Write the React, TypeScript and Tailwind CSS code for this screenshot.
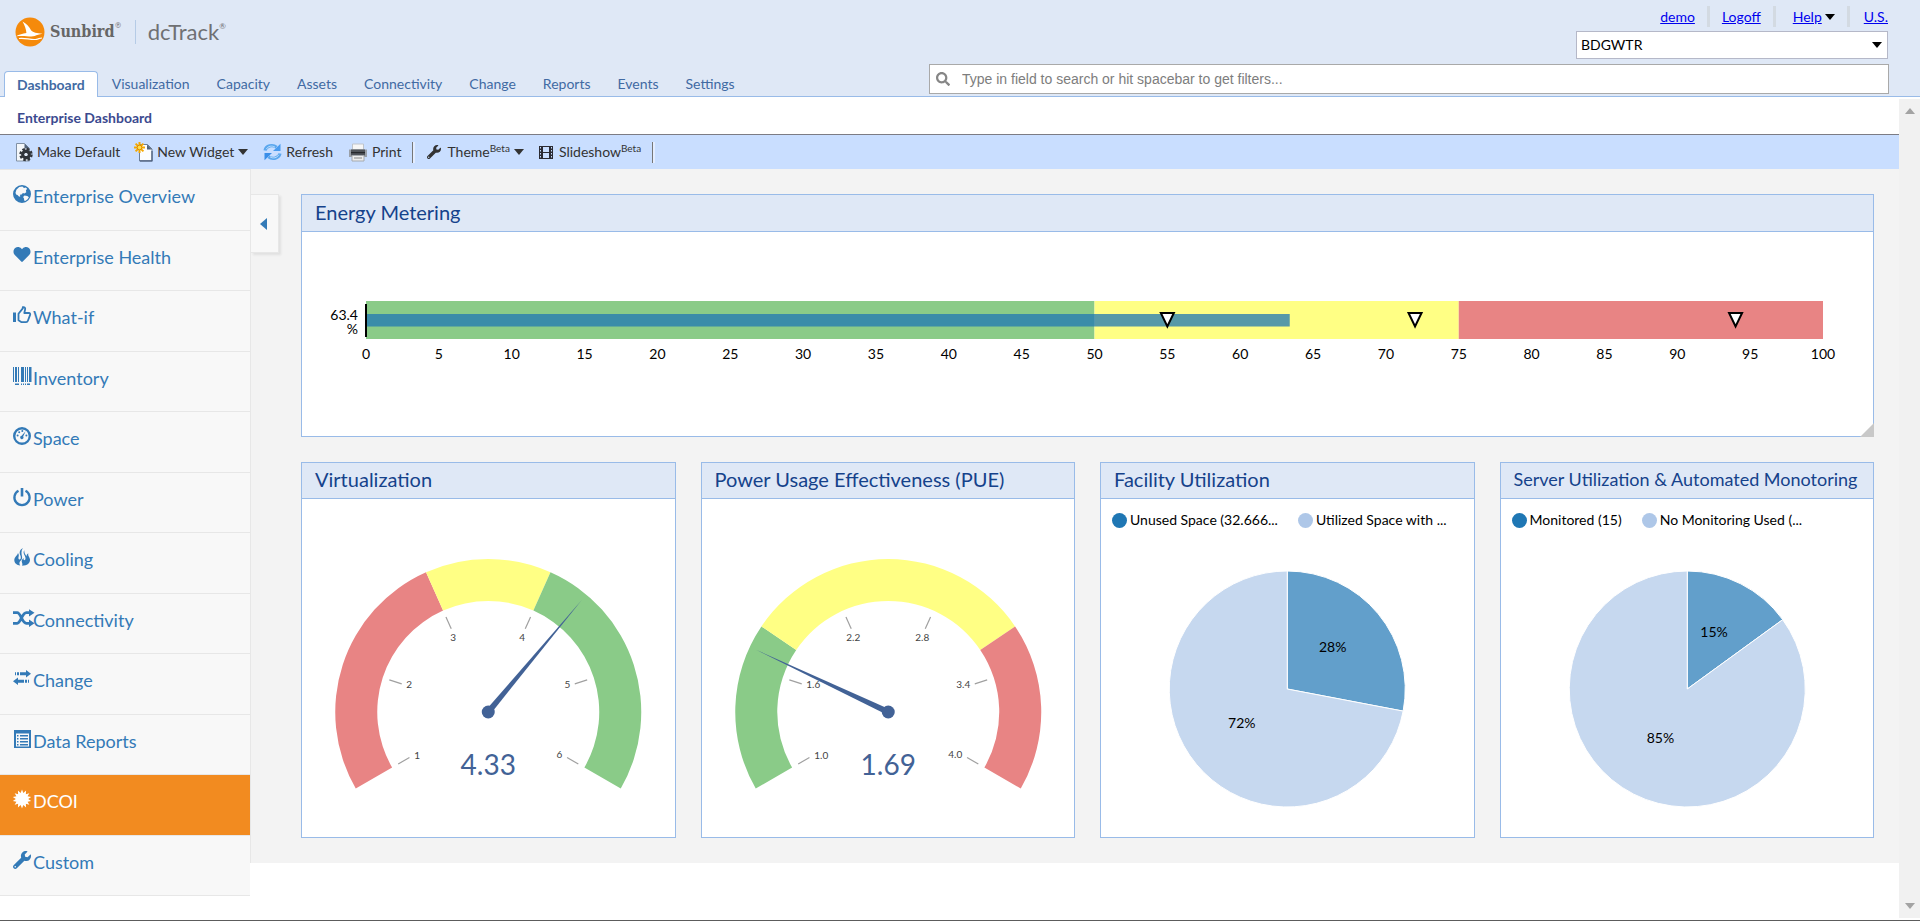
import { useState } from 'react';
import type { ReactNode } from 'react';
import { FaHeart, FaSearch, FaWrench } from 'react-icons/fa';

const GREEN = '#8acb88';
const YELLOW = '#ffff84';
const RED = '#e88484';
const NEEDLE = '#426296';

const tabs = ['Dashboard', 'Visualization', 'Capacity', 'Assets', 'Connectivity', 'Change', 'Reports', 'Events', 'Settings'];

// degrees run clockwise from twelve o'clock
const polar = (cx: number, cy: number, r: number, deg: number) => {
  const a = (deg * Math.PI) / 180;
  return [cx + r * Math.sin(a), cy - r * Math.cos(a)];
};

const arcPath = (cx: number, cy: number, inner: number, outer: number, from: number, to: number) => {
  const large = to - from > 180 ? 1 : 0;
  const [x1, y1] = polar(cx, cy, outer, from);
  const [x2, y2] = polar(cx, cy, outer, to);
  const [x3, y3] = polar(cx, cy, inner, to);
  const [x4, y4] = polar(cx, cy, inner, from);
  return `M${x1} ${y1}A${outer} ${outer} 0 ${large} 1 ${x2} ${y2}L${x3} ${y3}A${inner} ${inner} 0 ${large} 0 ${x4} ${y4}Z`;
};

/* ---------- icons ---------- */

const Glyph = ({ children }: { children: ReactNode }) => (
  <svg viewBox="0 0 18 18" className="h-[18px] w-[18px] shrink-0 overflow-visible" fill="currentColor" aria-hidden="true">
    {children}
  </svg>
);

const GlobeIcon = () => (
  <Glyph>
    <path
      fillRule="evenodd"
      d="M9 0a9 9 0 1 0 0 18A9 9 0 0 0 9 0ZM6.2 1.9l3.200-.3 1.600 1.300 1.700-.4 1.400 1.300-1.200 1.800.4 1.600-1.900 1.200-1.500-.3-1.300 1.300-1.800.4.6 1.500-1.200.5-1.700-1.800-1.400-.4-.6-1.800.9-3Zm5.300 8.600 2.800.4 1.600 1.300-1.300 2.100-2.400 1.800-1-.7-.2-2-.9-1.500Z"
    />
  </Glyph>
);

const ThumbIcon = () => (
  <Glyph>
    <path d="M0 6.500h3V16H0z" />
    <path
      d="M5.500 7.800 9.800 2.400V1.200c1.700-.5 2.800.7 2.300 2.300L11.300 7h4.600c1.200 0 1.600.9 1.200 1.900l-2.200 5.900c-.3.8-.9 1.300-1.800 1.300H8.200L5.500 14.300Z"
      fill="none"
      stroke="currentColor"
      strokeWidth="1.8"
      strokeLinejoin="round"
    />
  </Glyph>
);

const BarcodeIcon = () => (
  <Glyph>
    <path d="M0 0h1v15H0zM2 0h2v15H2zM5 0h1v15H5zM8 0h3v15H8zM12 0h1v15h-1zM14 0h1v15h-1zM16 0h2.500v15H16zM2 16.500h4v1.500H2zM8 16.500h1v1.500H8zM10 16.500h1v1.500h-1zM12 16.500h1v1.500h-1zM14 16.500h3v1.500h-3z" />
  </Glyph>
);

const DialIcon = () => (
  <Glyph>
    <circle cx="9" cy="9" r="7.8" fill="none" stroke="currentColor" strokeWidth="2.4" />
    <circle cx="4.600" cy="8.500" r="1" />
    <circle cx="6.200" cy="5.200" r="1" />
    <circle cx="9.300" cy="4" r="1" />
    <circle cx="13.400" cy="8.500" r="1" />
    <path d="m12.600 4.200-2.400 5.200a1.700 1.700 0 1 1-1.600-.7Z" />
  </Glyph>
);

const PowerIcon = () => (
  <Glyph>
    <path d="M5.500 2.700a7.600 7.600 0 1 0 7 0" fill="none" stroke="currentColor" strokeWidth="2.300" />
    <path d="M7.700 0h2.600v8.500H7.700z" />
  </Glyph>
);

const FlameIcon = () => (
  <Glyph>
    <path d="M9.800 0C6 2.400 6.400 5 7.300 7.300c.9 2.300.6 4-.6 4.200-1.300.2-1.500-1.500-1.100-2.700.4-1.400.3-2.700-.6-3.900C4.600 7.200 1.200 8.800 1.300 12.300c.1 3 2.600 4.900 5.900 5.100-1.500-1.900-.7-3.300.6-4.800 1-1.200 1.600-2.300 1.200-4.200C8.500 5.900 7.900 3 9.800 0Z" />
    <path d="M11.300 2.300c-1.500 2-.4 3.700.5 5.500 1 2 1 4-.1 4.300-1.100.3-1.300-.9-1-2.100-1.700 1.300-2.400 2.600-1.800 4.200.5 1.300.7 2.300.2 3.600 5.200 0 8.100-2.700 7.900-6.200-.2-2.800-2.300-3.300-1.700-6.400-1.400.8-1.900 1.900-1.700 3.300C12.400 6.700 11 4.900 11.300 2.300Z" />
  </Glyph>
);

const ShuffleIcon = () => (
  <Glyph>
    <path
      d="M0 3.700h4.200c3.600 0 4.800 10.600 9.200 10.600h3.300M0 14.300h4.200c3.600 0 4.800-10.600 9.200-10.600h3.300"
      fill="none"
      stroke="currentColor"
      strokeWidth="2.800"
    />
    <path d="M16 .2 21.500 3.700 16 7.400zM16 10.600l5.500 3.700-5.500 3.700z" />
  </Glyph>
);

const TransferIcon = () => (
  <Glyph>
    <path d="M2 3.300h1v3H2zM4 3.300h2v3H4zM7 3.300h6V1l5 3.800L13 8.600V6.300H7zM16 10.800h-1v3h1zM14 10.800h-2v3h2zM11 10.800H5V8.500l-5 3.800 5 3.700v-2.200h6z" />
  </Glyph>
);

const ListIcon = () => (
  <Glyph>
    <path fillRule="evenodd" d="M1 0h17v18H1zM3 3.500v13h13v-13z" />
    <path d="M4 5h1.500v1.500H4zM7 5h8v1.500H7zM4 8h1.500v1.500H4zM7 8h8v1.500H7zM4 11h1.500v1.500H4zM7 11h8v1.500H7zM4 14h1.500v1.500H4zM7 14h8v1.500H7z" />
  </Glyph>
);

const BurstIcon = () => {
  const points = Array.from({ length: 28 }, (_, i) => polar(9, 9, i % 2 ? 6.2 : 9.4, (i * 360) / 28).join(','));
  return (
    <Glyph>
      <polygon points={points.join(' ')} />
    </Glyph>
  );
};

const FilmIcon = () => (
  <svg viewBox="0 0 14 13" className="h-[13px] w-[14px] shrink-0" aria-hidden="true">
    <path fill="#2b2b33" fillRule="evenodd" d="M0 0h14v13H0zM4 1v5h6V1zM4 7v5h6V7z" />
    <path d="M1.500 1v11M12.500 1v11" stroke="#c9deff" strokeWidth="1" strokeDasharray="1.500 1.500" />
  </svg>
);

const PageGearIcon = () => (
  <svg viewBox="0 0 17 20" className="h-5 w-[17px] shrink-0" aria-hidden="true">
    <path d="M.5 1.500h8l5 5V19H.5z" fill="#f4f7fa" stroke="#8090a4" />
    <path d="M8.500 1.500v5h5z" fill="#52647c" />
    <circle cx="10" cy="12.500" r="3.200" fill="none" stroke="#30343a" strokeWidth="3.400" />
    <circle cx="10" cy="12.500" r="5.500" fill="none" stroke="#30343a" strokeWidth="2.400" strokeDasharray="2.500 1.820" />
    <circle cx="10" cy="12.500" r="1.600" fill="#dfe8f6" />
  </svg>
);

const NewPageIcon = () => (
  <svg viewBox="0 0 19 20" className="h-5 w-[19px] shrink-0" aria-hidden="true">
    <path d="M5.500 2.500h8l4.500 4.500v12H5.500z" fill="#fbfdff" stroke="#6d7f98" />
    <path d="M13 2.500v5h5z" fill="#52647c" />
    <path d="M6 18.800h12V9" fill="none" stroke="#4b5d7c" strokeWidth="1.200" />
    <path d="M5.500 0v11M0 5.500h11M1.600 1.600l7.800 7.800M9.400 1.600 1.600 9.400" stroke="#f5a800" strokeWidth="2" />
    <circle cx="5.500" cy="5.500" r="2.300" fill="#ffe14d" stroke="#e08b00" />
  </svg>
);

const RefreshIcon = () => (
  <svg viewBox="0 0 19 18" className="h-[18px] w-[19px] shrink-0" aria-hidden="true">
    <path d="M2 7.500C3 2.800 9.500 1 13.500 4.300" fill="none" stroke="#5ba7ee" strokeWidth="3.200" />
    <path d="M17.500.800V8H10z" fill="#4a9cf0" />
    <path d="M17 10.500C16 15.200 9.500 17 5.500 13.700" fill="none" stroke="#5ba7ee" strokeWidth="3.200" />
    <path d="M1.500 17.200V10H9z" fill="#3a8ee8" />
    <path d="M3.200 6.200C5 3 9 2.200 12 4.200M15.800 11.800C14 15 10 15.800 7 13.800" fill="none" stroke="#b9dcfb" />
  </svg>
);

const PrinterIcon = () => (
  <svg viewBox="0 0 20 19" className="h-[19px] w-5 shrink-0" aria-hidden="true">
    <path d="M4.500 1h11v6h-11z" fill="#f6f6f6" stroke="#c0c4ca" />
    <path d="M1 6.500h18V14H1z" fill="#9aa0a8" />
    <path d="M3 6.500h14v6H3z" fill="#50545a" />
    <path d="M3 9h14v1.200H3z" fill="#26282c" />
    <path d="M4 12.500h12v5.500H4z" fill="#ededed" stroke="#a5a9ae" />
    <path d="M6 15h8" stroke="#888" />
  </svg>
);

const Caret = () => (
  <svg viewBox="0 0 10 6" className="h-1.5 w-2.5 shrink-0" fill="currentColor" aria-hidden="true">
    <path d="M0 0h10L5 6z" />
  </svg>
);

const navItems: { label: string; icon: ReactNode }[] = [
  { label: 'Enterprise Overview', icon: <GlobeIcon /> },
  { label: 'Enterprise Health', icon: <FaHeart className="h-[17px] w-[18px] shrink-0" /> },
  { label: 'What-if', icon: <ThumbIcon /> },
  { label: 'Inventory', icon: <BarcodeIcon /> },
  { label: 'Space', icon: <DialIcon /> },
  { label: 'Power', icon: <PowerIcon /> },
  { label: 'Cooling', icon: <FlameIcon /> },
  { label: 'Connectivity', icon: <ShuffleIcon /> },
  { label: 'Change', icon: <TransferIcon /> },
  { label: 'Data Reports', icon: <ListIcon /> },
  { label: 'DCOI', icon: <BurstIcon /> },
  { label: 'Custom', icon: <FaWrench className="h-[18px] w-[18px] shrink-0" /> },
];

/* ---------- header ---------- */

const Logo = () => (
  <div className="flex h-9 items-center pl-[15px]">
    <svg viewBox="0 0 30 30" className="h-[30px] w-[30px]" aria-hidden="true">
      <circle cx="15" cy="15" r="14.500" fill="#f58a0b" />
      <path d="M7.500 4.500c3.800 1.800 6.800 5.500 8.700 9 1.800 1.800 5.400 2.800 11.300 3.300-3.500.6-5.500 1.300-7.800 2.300-5.200 1-10.700-1-18.700.2 3.400-1.800 6.600-2.600 10.400-3.200C11.300 12.300 9.500 8 7.500 4.500Z" fill="#fff" />
      <path d="M4 21.500c6-1 12 1.800 17.500.8 2-.3 3.500-1.300 5.500-1.300" fill="none" stroke="#fff" strokeWidth="1.200" />
    </svg>
    <span className="ml-[5px] flex items-start font-['DejaVu_Serif_Condensed','DejaVu_Serif',serif] text-base leading-6 font-bold text-[#666]">
      Sunbird
      <span className="text-[8px] leading-3 font-normal">®</span>
    </span>
    <span className="ml-[13px] h-6 w-px bg-[#b5cbe6]" />
    <span className="ml-3 flex items-start text-[22px] leading-6 text-[#6f7073]">
      dcTrack
      <span className="text-[8px] leading-3">®</span>
    </span>
  </div>
);

const Header = () => {
  const [active, setActive] = useState('Dashboard');

  return (
    <header className="flex h-[97px] shrink-0 justify-between border-b border-[#99bbe8] bg-[#dfe8f6]">
      <div className="flex flex-col justify-between pt-[14px]">
        <Logo />
        <nav className="-mb-px flex gap-px pl-1">
          {tabs.map((tab) => (
            <button
              key={tab}
              type="button"
              onClick={() => setActive(tab)}
              className={
                tab === active
                  ? 'h-[26px] rounded-t border border-b-0 border-[#99bbe8] bg-white px-3 text-sm font-bold text-[#416aa3]'
                  : 'h-[26px] px-[13px] text-sm text-[#416aa3]'
              }
            >
              {tab}
            </button>
          ))}
        </nav>
      </div>

      <div className="flex w-[calc(50%+31px)] flex-col items-end pt-1.5 pr-[31px]">
        <div className="mr-px flex h-[21px] items-center text-sm text-[#0000ee]">
          <a href="#demo" className="mr-3 underline">demo</a>
          <span className="h-full w-[3px] bg-[#d3dae2]" />
          <a href="#logoff" className="mx-3 underline">Logoff</a>
          <span className="h-full w-[3px] bg-[#d3dae2]" />
          <a href="#help" className="ml-[17px] underline">Help</a>
          <span className="mr-3 ml-[3px] text-black"><Caret /></span>
          <span className="h-full w-[3px] bg-[#d3dae2]" />
          <a href="#units" className="ml-[14px] underline">U.S.</a>
        </div>
        <div className="relative mt-1 mr-px w-[312px]">
          <select
            aria-label="Location"
            className="h-7 w-full appearance-none border border-[#b5b8c8] bg-white pl-1 text-sm text-black"
          >
            <option>BDGWTR</option>
          </select>
          <span className="pointer-events-none absolute top-[11px] right-1.5"><Caret /></span>
        </div>
        <label className="mt-[5px] flex h-[30px] w-full items-center border border-[#a9a9a9] bg-white pl-1.5">
          <FaSearch className="h-[14px] w-[14px] text-[#868686]" />
          <input
            type="text"
            aria-label="Search"
            placeholder="Type in field to search or hit spacebar to get filters..."
            className="ml-3 flex-1 font-['Liberation_Sans',sans-serif] text-sm outline-none placeholder:text-[#7d7d7d]"
          />
        </label>
      </div>
    </header>
  );
};

const Divider = () => <span className="h-[21px] w-[3px] border-r-2 border-l border-r-[#e3edff] border-l-[#777]" />;

const Toolbar = () => (
  <div className="flex h-[34px] items-center bg-[#c9deff] pl-4 text-sm text-[#333]">
    <button type="button" className="flex items-center gap-1"><PageGearIcon />Make Default</button>
    <button type="button" className="ml-[14px] flex items-center gap-1"><NewPageIcon />New Widget<Caret /></button>
    <button type="button" className="ml-[15px] flex items-center gap-1"><RefreshIcon />Refresh</button>
    <button type="button" className="mr-[11px] ml-[15px] flex items-center gap-1"><PrinterIcon />Print</button>
    <Divider />
    <button type="button" className="ml-3 flex items-center gap-1">
      <FaWrench className="mr-0.5 h-[14px] w-[14px]" />
      <span>Theme<sup className="text-[10px]">Beta</sup></span>
      <Caret />
    </button>
    <button type="button" className="mr-[11px] ml-[15px] flex items-center gap-1.5">
      <FilmIcon />
      <span>Slideshow<sup className="text-[10px]">Beta</sup></span>
    </button>
    <Divider />
  </div>
);

/* ---------- sidebar ---------- */

const Sidebar = () => {
  const [active, setActive] = useState('DCOI');

  return (
    <nav className="w-[250px] shrink-0 self-start border-t border-[#e7e7e7] bg-[#f8f8f8]">
      {navItems.map(({ label, icon }) => (
        <button
          key={label}
          type="button"
          onClick={() => setActive(label)}
          className={`flex w-full items-start gap-0.5 border-b border-[#e7e7e7] pt-[15px] pl-[13px] text-left text-lg leading-[22px] odd:h-[61px] even:h-[60px] ${
            label === active ? 'bg-[#f28b20] text-white' : 'text-[#337ab7]'
          }`}
        >
          {icon}
          <span>{label}</span>
        </button>
      ))}
    </nav>
  );
};

/* ---------- widgets ---------- */

interface PanelProps {
  title: string;
  wide?: boolean;
  children: ReactNode;
}

const Panel = ({ title, wide, children }: PanelProps) => (
  <section className="relative min-w-0 border border-[#99bbe8] bg-white">
    {/* long titles drop a size so that they stay on one line */}
    <h2
      className={`border-b border-[#99bbe8] bg-[#dfe8f6] pl-[13px] whitespace-nowrap text-[#15428b] ${
        title.length > 35 ? 'text-lg' : 'text-xl'
      } ${wide ? 'h-[37px] leading-[34px]' : 'h-9 leading-8'}`}
    >
      <span className={wide ? 'leading-[34px]' : 'leading-8'}>{title}</span>
    </h2>
    {children}
  </section>
);

const bands = [
  { from: 0, to: 50, color: GREEN },
  { from: 50, to: 75, color: YELLOW },
  { from: 75, to: 100, color: RED },
];

const EnergyMetering = () => (
  <Panel title="Energy Metering" wide>
    <div className="flex h-[204px] pt-[69px] pr-[50px] pl-[28px]">
      <div className="w-7 pt-[7px] text-right text-sm leading-[14px] text-black">63.4 %</div>
      <svg className="ml-2 h-[70px] min-w-0 flex-1 overflow-visible" role="img" aria-label="Energy metering 63.4 %">
        {bands.map((b) => (
          <rect key={b.from} x={`${b.from}%`} y="0" width={`${b.to - b.from}%`} height="38" fill={b.color} />
        ))}
        <rect x="0" y="13" width="63.4%" height="12.500" fill="#1f77b4" fillOpacity="0.75" />
        <rect x="-1" y="3" width="2" height="33" fill="#000" />
        {[55, 72, 94].map((v) => (
          <svg key={v} x={`${v}%`} y="11" className="overflow-visible">
            <path d="M-6.500 1h13L0 14.500z" fill="#fff" stroke="#000" strokeWidth="2" />
          </svg>
        ))}
        {Array.from({ length: 21 }, (_, i) => (
          <text key={i} x={`${i * 5}%`} y="58" textAnchor="middle" className="text-sm">
            {i * 5}
          </text>
        ))}
      </svg>
    </div>
    <svg viewBox="0 0 14 14" className="absolute -right-px -bottom-px h-[14px] w-[14px]" aria-hidden="true">
      <path d="M14 0v14H0z" fill="#c8c8c8" />
    </svg>
  </Panel>
);

const labelSpots: { x: number; y: number; anchor: 'start' | 'middle' | 'end' }[] = [
  { x: -74, y: 47, anchor: 'start' },
  { x: -82, y: -24, anchor: 'start' },
  { x: -35, y: -71, anchor: 'middle' },
  { x: 34, y: -71, anchor: 'middle' },
  { x: 82, y: -24, anchor: 'end' },
  { x: 74, y: 46, anchor: 'end' },
];

interface GaugeProps {
  title: string;
  value: number;
  min: number;
  max: number;
  labels: string[];
  zones: { to: number; color: string }[];
}

const Gauge = ({ title, value, min, max, labels, zones }: GaugeProps) => {
  const toAngle = (v: number) => -120 + ((v - min) / (max - min)) * 240;

  return (
    <Panel title={title}>
      <svg viewBox="-160 -213 320 338" className="block h-[338px] w-full" role="img" aria-label={`${title} ${value}`}>
        {zones.map((z, i) => (
          <path
            key={z.to}
            d={arcPath(0, 0, 111, 153, toAngle(i ? zones[i - 1].to : min), toAngle(z.to))}
            fill={z.color}
          />
        ))}
        {labels.map((label, i) => {
          const [x1, y1] = polar(0, 0, 104, -120 + i * 48);
          const [x2, y2] = polar(0, 0, 91, -120 + i * 48);
          const spot = labelSpots[i];
          return (
            <g key={label}>
              <line x1={x1} y1={y1} x2={x2} y2={y2} stroke="#a0a0a0" strokeWidth="1.2" />
              <text x={spot.x} y={spot.y} textAnchor={spot.anchor} fill="#444" className="text-[10px]">
                {label}
              </text>
            </g>
          );
        })}
        <path d="M-3 0 0-146 3 0z" fill={NEEDLE} transform={`rotate(${toAngle(value)})`} />
        <circle r="6.500" fill={NEEDLE} />
        <text y="63" textAnchor="middle" fill={NEEDLE} className="text-[28px]">
          {value}
        </text>
      </svg>
    </Panel>
  );
};

interface PieProps {
  title: string;
  share: number;
  legend: string[];
}

const Pie = ({ title, share, legend }: PieProps) => {
  const split = (share / 100) * 360;
  const [ax, ay] = polar(0, 0, 59, split / 2);
  const [bx, by] = polar(0, 0, 59, split / 2 + 180);

  return (
    <Panel title={title}>
      <div className="flex h-[42px] items-center gap-5 pl-[11px] text-sm whitespace-nowrap text-black">
        <span className="flex items-center gap-[3px]">
          <span className="h-[15px] w-[15px] rounded-full bg-[#1f77b4]" />
          {legend[0]}
        </span>
        <span className="flex items-center gap-[3px]">
          <span className="h-[15px] w-[15px] rounded-full bg-[#aec7e8]" />
          {legend[1]}
        </span>
      </div>
      <svg viewBox="-120 -148 240 296" className="block h-[296px] w-full" role="img" aria-label={title}>
        <g stroke="#fff">
          <path d={arcPath(0, 0, 0, 118, 0, split)} fill="#629fcb" />
          <path d={arcPath(0, 0, 0, 118, split, 360)} fill="#c6d8ef" />
        </g>
        <text x={ax} y={ay + 1} textAnchor="middle" className="text-sm">{share}%</text>
        <text x={bx} y={by + 1} textAnchor="middle" className="text-sm">{100 - share}%</text>
      </svg>
    </Panel>
  );
};

const App = () => {
  const [open, setOpen] = useState(true);

  return (
    <div className="flex min-h-screen flex-col border-b border-[#5c5c5c] bg-white font-[Lato,sans-serif]">
      <Header />
      <div className="flex flex-1">
        <div className="min-w-0 flex-1">
          <h1 className="h-[38px] border-b border-[#7c7c84] pl-[17px] text-sm leading-[42px] font-bold text-[#3b4a8f]">
            Enterprise Dashboard
          </h1>
          <Toolbar />
          <div className="flex">
            {open && <Sidebar />}
            <main className="flex min-w-0 flex-1 items-start self-start border-l border-[#e7e7e7] bg-[#f3f3f3] pt-[25px] pr-[25px] pb-[25px]">
              <button
                type="button"
                aria-label="Toggle sidebar"
                onClick={() => setOpen(!open)}
                className="mr-[22px] flex h-[59px] w-7 shrink-0 items-center justify-center border border-l-0 border-[#e7e7e7] bg-[#f8f8f8] pr-0.5 text-[#337ab7] shadow-[2px_2px_2px_#e0e0e0]"
              >
                <svg viewBox="0 0 7 12" className="h-3 w-[7px]" fill="currentColor" aria-hidden="true">
                  <path d="M7 0v12L0 6z" />
                </svg>
              </button>
              <div className="flex min-w-0 flex-1 flex-col gap-[25px]">
                <EnergyMetering />
                <div className="grid grid-cols-4 gap-[25px]">
                  <Gauge
                    title="Virtualization"
                    value={4.33}
                    min={1}
                    max={6}
                    labels={['1', '2', '3', '4', '5', '6']}
                    zones={[{ to: 3, color: RED }, { to: 4, color: YELLOW }, { to: 6, color: GREEN }]}
                  />
                  <Gauge
                    title="Power Usage Effectiveness (PUE)"
                    value={1.69}
                    min={1}
                    max={4}
                    labels={['1.0', '1.6', '2.2', '2.8', '3.4', '4.0']}
                    zones={[{ to: 1.8, color: GREEN }, { to: 3.2, color: YELLOW }, { to: 4, color: RED }]}
                  />
                  <Pie title="Facility Utilization" share={28} legend={['Unused Space (32.666...', 'Utilized Space with ...']} />
                  <Pie
                    title="Server Utilization & Automated Monotoring"
                    share={15}
                    legend={['Monitored (15)', 'No Monitoring Used (...']}
                  />
                </div>
              </div>
            </main>
          </div>
        </div>

        {/* Scroll track */}
        <div className="mt-0.5 mb-0.5 flex w-[21px] flex-col items-center justify-between bg-[#f1f1f1] py-[9px] text-[#a3a3a3]">
          <svg viewBox="0 0 10 6" className="h-1.5 w-2.5" fill="currentColor" aria-hidden="true">
            <path d="M5 0l5 6H0z" />
          </svg>
          <Caret />
        </div>
      </div>
    </div>
  );
};

export default App;
